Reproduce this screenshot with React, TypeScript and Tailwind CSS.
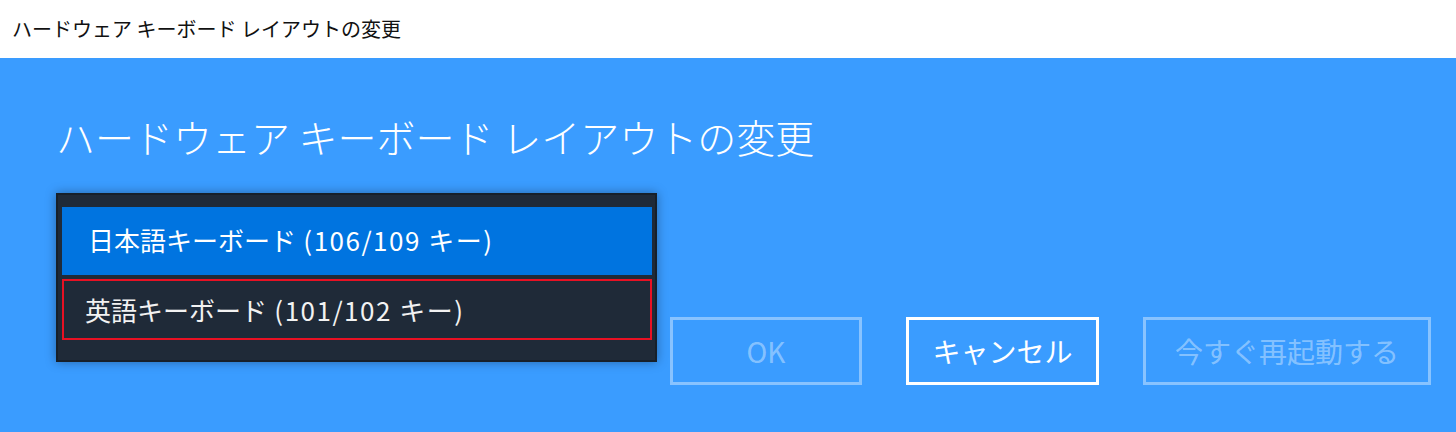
export default function App() {
  return (
    <div className="w-[1456px] h-[432px] overflow-hidden bg-[#3a9cff] font-['Noto_Sans_CJK_JP',sans-serif]">
      {/* Window title bar */}
      <div className="h-[58px] bg-white flex items-center pl-3 text-[20px] text-[#111]">
        ハードウェア キーボード レイアウトの変更
      </div>

      <div className="relative">
        <h1 className="pl-[56px] pt-[50px] text-[39px] leading-[56px] font-light text-white">
          ハードウェア キーボード レイアウトの変更
        </h1>

        {/* Buttons */}
        <div className="mt-[153px] flex justify-end gap-[44px] pr-[25px]">
          <button className="w-[192px] h-[68px] border-[3px] border-white/40 text-[28px] text-white/40 flex items-center justify-center">
            OK
          </button>
          <button className="w-[193px] h-[68px] border-[3px] border-white text-[28px] text-white flex items-center justify-center">
            キャンセル
          </button>
          <button className="w-[288px] h-[68px] border-[3px] border-white/40 text-[28px] text-white/40 flex items-center justify-center">
            今すぐ再起動する
          </button>
        </div>

        {/* Open dropdown list */}
        <div className="absolute left-[56px] top-[135px] w-[601px] h-[169px] border-2 border-[#17202a] bg-[#1f2a38] pt-[12px] pl-[4px] pr-[3px] shadow-[0_0_10px_rgba(0,0,0,0.35)]">
          <div className="h-[68px] bg-[#0074e0] pl-[26px] pb-[4px] flex items-center text-[26px] text-white">
            日本語キーボード<span className="tracking-[1.5px]">&nbsp;(106/109 キー)</span>
          </div>
          <div className="mt-[4px] h-[61px] border-2 border-[#e81123] pl-[21px] flex items-center text-[26px] text-[#f2f2f2]">
            英語キーボード<span className="tracking-[1.5px]">&nbsp;(101/102 キー)</span>
          </div>
        </div>
      </div>
    </div>
  );
}
